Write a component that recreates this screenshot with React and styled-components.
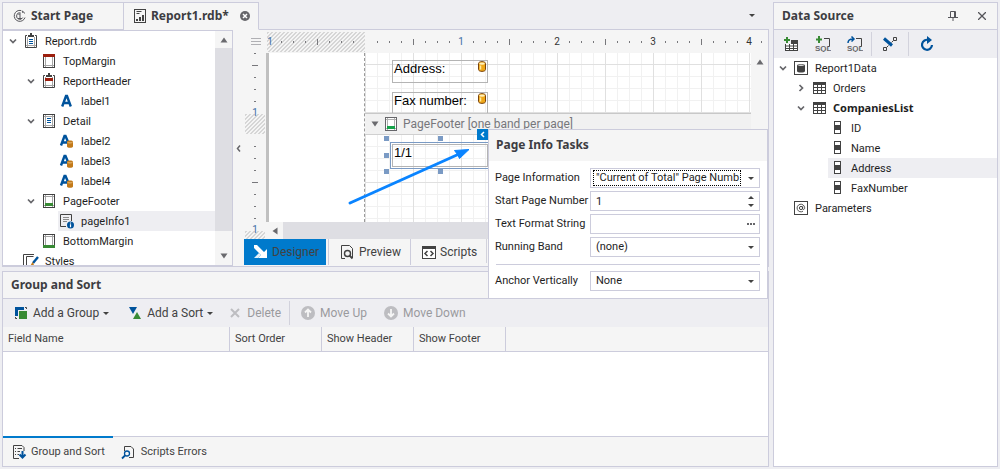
import React from "react";
import styled, { createGlobalStyle, css } from "styled-components";

const c = {
  page: "#eeeef2",
  panel: "#f5f5f5",
  line: "#ccccdc",
  text: "#1e1e1e",
  title: "#3d3d42",
  soft: "#dedee3",
  blue: "#007acc",
  navy: "#00539c",
  green: "#388a34",
  muted: "#9a9a9e",
  icon: "#424242",
};

const GlobalStyle = createGlobalStyle`
  * { box-sizing: border-box; }
  body { margin: 0; background: ${c.page}; }
  button, input, select { font: inherit; color: inherit; margin: 0; padding: 0; border: 0; background: none; border-radius: 0; }
  ul { list-style: none; margin: 0; padding: 0; }
  svg { display: block; flex: none; }
  h2 { margin: 0; font-family: "Noto Sans", sans-serif; font-size: 12px; }
`;

const Shell = styled.main`
  display: flex;
  gap: 4px;
  min-height: 100vh;
  padding: 2px;
  background: ${c.page};
  color: ${c.text};
  font-family: Roboto, sans-serif;
  font-size: 11px;
  line-height: 20px;
`;

const LeftColumn = styled.div`
  flex: 1;
  min-width: 0;
  display: flex;
  flex-direction: column;
`;

/* document tabs */
const TabStrip = styled.div`
  display: flex;
  height: 28px;
  border-bottom: 1px solid ${c.line};
`;

const DocTab = styled.button`
  display: flex;
  align-items: center;
  gap: 5px;
  width: ${(p) => p.$width};
  height: 28px;
  padding: 0 8px 0 10px;
  border: 1px solid ${c.line};
  border-bottom-color: ${(p) => (p.$active ? c.panel : c.line)};
  ${(p) => p.$active && css`border-left: 0;`}
  background: ${c.panel};
  color: ${c.title};
  font-family: "Noto Sans", sans-serif;
  font-size: 12px;
  font-weight: 700;
  white-space: nowrap;
`;

const PushRight = styled.span`
  margin-left: auto;
`;

const TabMenu = styled.button`
  margin-left: auto;
  padding: 0 14px;
`;

/* workspace: report explorer + designer */
const Workspace = styled.div`
  display: flex;
  flex: 0 0 237px;
  min-height: 0;
  border: 1px solid ${c.line};
  border-top: 0;
  background: ${c.panel};
`;

const Explorer = styled.section`
  display: flex;
  width: 230px;
  border: 1px solid ${c.line};
  border-left: 0;
  background: #fff;
  overflow: hidden;
`;

const Tree = styled.ul`
  flex: 1;
  min-width: 0;
`;

const TreeRow = styled.li`
  display: flex;
  align-items: center;
  height: 20px;
  padding-left: ${(p) => 2 + p.$level * 18}px;
  font-size: 11px;
  white-space: nowrap;
  ${(p) => p.$bold && css`font-family: "Noto Sans", sans-serif; font-weight: 700;`}
`;

const Twisty = styled.span`
  display: flex;
  justify-content: center;
  width: 17px;
  padding-right: 2px;
  flex: none;
`;

const TreeItem = styled.span`
  display: flex;
  align-items: center;
  gap: 6px;
  flex: 1;
  height: 20px;
  padding-left: 1px;
  background: ${(p) => (p.$selected ? c.page : "transparent")};
`;

const TreeName = styled.span`
  padding-top: 2px;
`;

const ScrollBar = styled.div`
  display: flex;
  flex-direction: column;
  align-items: center;
  width: 17px;
  background: ${c.panel};
`;

const ScrollButton = styled.button`
  display: grid;
  place-items: center;
  width: 17px;
  height: ${(p) => (p.$tall ? 34 : 17)}px;
  ${(p) => p.$tall && css`padding-top: 16px;`}
`;

const ScrollThumb = styled.div`
  flex: 1;
  width: 100%;
  background: ${c.soft};
`;

const Splitter = styled.button`
  display: grid;
  place-items: center;
  width: 11px;
`;

const Designer = styled.section`
  position: relative;
  flex: 1;
  min-width: 0;
  display: flex;
  flex-direction: column;
`;

const RulerRow = styled.div`
  display: flex;
  height: 23px;
  padding: 2px 0 1px;
`;

const RulerCorner = styled.div`
  display: grid;
  place-items: center;
  width: 23px;
`;

const hatch = css`
  background-color: ${c.panel};
  background-image: linear-gradient(135deg, #d6d6d6 25%, transparent 25% 50%, #d6d6d6 50% 75%, transparent 75%);
  background-size: 4px 4px;
`;

const HatchWide = styled.div`
  width: 98px;
  height: 20px;
  ${hatch}
`;

const RulerScale = styled.div`
  position: relative;
  flex: 1;
  display: flex;
  overflow: hidden;
`;

const RulerMarks = styled.svg`
  position: absolute;
  left: 0;
  top: 0;
`;

const CanvasRow = styled.div`
  display: flex;
  flex: 1;
  min-height: 0;
`;

const SideRuler = styled.div`
  position: relative;
  width: 22px;
  padding: 61px 1px 0;
  overflow: hidden;
`;

const HatchSide = styled.div`
  width: 20px;
  height: 20px;
  margin-bottom: 97px;
  ${hatch}
`;

const Margin = styled.div`
  width: 99px;
  border-left: 3px solid #c0c0c0;
  border-right: 1px dashed #9a9a9a;
  background: #fff;
`;

const Bands = styled.div`
  flex: 1;
  min-width: 0;
  display: flex;
  flex-direction: column;
`;

const Grid = styled.div`
  position: relative;
  ${(p) => (p.$h ? css`height: ${p.$h}px;` : css`flex: 1;`)}
  overflow: hidden;
  background-color: #fff;
  background-image:
    linear-gradient(90deg, #e0e0e0 1px, transparent 1px),
    linear-gradient(#e0e0e0 1px, transparent 1px),
    linear-gradient(90deg, #f1f1f1 1px, transparent 1px),
    linear-gradient(#f1f1f1 1px, transparent 1px);
  background-size: 48px 48px, 48px 48px, 12px 12px, 12px 12px;
  background-position: 0 0, 0 ${(p) => p.$y}px, 0 0, 0 ${(p) => p.$y}px;
`;

const BandHeader = styled.div`
  display: flex;
  align-items: center;
  gap: 6px;
  height: 22px;
  padding-left: 6px;
  border-top: 1px solid #c8c8c8;
  border-bottom: 1px solid #d0d0d0;
  background: #f1f1f1;
  color: #77777c;
  font-size: 12px;
  white-space: nowrap;
  overflow: hidden;
`;

/* report elements are placed freely on the band surface */
const ReportLabel = styled.div`
  position: absolute;
  left: 27px;
  top: ${(p) => p.$top}px;
  width: 96px;
  height: 23px;
  padding-left: 1px;
  border: 1px solid #b4b4b4;
  color: #000;
  font-family: "Liberation Sans", Arial, sans-serif;
  font-size: 13px;
  line-height: 16px;
  ${(p) => p.$selected && css`outline: 1px solid #7a9ac4; outline-offset: 1px;`}
`;

const Badge = styled.span`
  position: absolute;
  right: 1px;
  top: 0;
`;

const Handle = styled.i`
  position: absolute;
  left: ${(p) => p.$x}px;
  top: ${(p) => p.$y}px;
  width: 5px;
  height: 5px;
  background: #7a9ac4;
`;

const Pointer = styled.svg`
  position: absolute;
  left: 104px;
  top: 116px;
`;

const SideScroll = styled.div`
  width: 17px;
  padding-top: 6px;
  display: flex;
  justify-content: center;
  align-items: flex-start;
`;

const CanvasMain = styled.div`
  flex: 1;
  min-width: 0;
  display: flex;
  flex-direction: column;
`;

const CanvasBody = styled.div`
  flex: 1;
  min-height: 0;
  display: flex;
`;

const BottomScroll = styled.div`
  display: flex;
  height: 17px;
`;

const ViewTabs = styled.div`
  display: flex;
  height: 27px;
  padding-bottom: 1px;
  gap: 2px;
  font-size: 12px;
  color: ${c.icon};
`;

const ViewTab = styled.button`
  display: flex;
  align-items: center;
  gap: 4px;
  width: ${(p) => p.$width}px;
  padding: 0 10px;
  background: ${(p) => (p.$active ? c.blue : "transparent")};
  border-left: ${(p) => (p.$active ? "0" : `1px solid ${c.line}`)};
`;

const SmartTag = styled.button`
  position: absolute;
  left: 233px;
  top: 99px;
  display: grid;
  place-items: center;
  width: 11px;
  height: 11px;
  background: ${c.blue};
`;

const TaskPopup = styled.form`
  position: absolute;
  left: 244px;
  right: 0;
  top: 99px;
  z-index: 2;
  padding-bottom: 4px;
  border: 1px solid ${c.line};
  background: #fff;
`;

const PopupTitle = styled.h2`
  height: 31px;
  padding: 0 7px;
  margin-bottom: 7px;
  background: ${c.panel};
  color: ${c.title};
  line-height: 30px;
`;

const FieldRow = styled.div`
  display: flex;
  align-items: center;
  justify-content: space-between;
  height: 20px;
  margin: 0 7px 3px 6px;
  white-space: nowrap;
`;

const FieldBox = styled.div`
  position: relative;
  display: flex;
  align-items: center;
  width: 170px;
  height: 20px;
  border: 1px solid ${c.line};
  background: #fff;
`;

const fieldText = css`
  flex: 1;
  width: 100%;
  min-width: 0;
  height: 16px;
  margin: 0 18px 0 2px;
  padding-left: 3px;
  line-height: 14px;
  outline: 0;
  ${(p) => p.$focused && css`border: 1px dotted #000; padding-left: 2px;`}
`;

const SelectText = styled.select`
  appearance: none;
  ${fieldText}
`;

const InputText = styled.input`
  ${fieldText}
`;

const FieldMark = styled.span`
  position: absolute;
  right: 3px;
  width: 10px;
  display: grid;
  justify-items: center;
  gap: 5px;
  pointer-events: none;
`;

const PopupRule = styled.hr`
  height: 1px;
  margin: 7px 7px 6px;
  border: 0;
  background: ${c.line};
`;

/* group and sort */
const GroupPanel = styled.section`
  flex: 1;
  display: flex;
  flex-direction: column;
  margin-top: 4px;
  border: 1px solid ${c.line};
  background: #fff;
`;

const PanelTitle = styled.header`
  display: flex;
  align-items: center;
  height: 27px;
  padding: 0 8px;
  gap: 20px;
  border-bottom: 1px solid ${c.line};
  background: ${c.panel};
  color: ${c.title};
`;

const ToolBar = styled.div`
  display: flex;
  align-items: center;
  height: 28px;
  padding: 0 10px;
  background: ${c.page};
  color: ${c.icon};
  font-size: 12px;
`;

const ToolButton = styled.button`
  display: flex;
  align-items: center;
  gap: 4px;
  margin-right: ${(p) => p.$gap || 0}px;
  white-space: nowrap;
  &:disabled { color: ${c.muted}; }
`;

const ToolSeparator = styled.span`
  width: 1px;
  height: 24px;
  margin-right: ${(p) => p.$gap || 0}px;
  background: #d2d2dc;
`;

const SortTable = styled.table`
  width: 100%;
  table-layout: fixed;
  border-collapse: separate;
  border-spacing: 0;
`;

const HeadCell = styled.th`
  width: ${(p) => p.$width};
  height: 25px;
  padding: 0 5px;
  border-right: ${(p) => (p.$last ? 0 : 1)}px solid ${c.line};
  border-bottom: 1px solid ${c.line};
  background: ${c.panel};
  color: ${c.icon};
  font-weight: 400;
  text-align: left;
`;

const DockTabs = styled.div`
  display: flex;
  height: 30px;
  margin-top: auto;
  border-top: 1px solid ${c.line};
  background: ${c.panel};
  color: ${c.icon};
`;

const DockTab = styled.button`
  display: flex;
  align-items: center;
  gap: 4px;
  height: 29px;
  padding: 0 8px;
  margin-top: -1px;
  border-top: 2px solid ${(p) => (p.$active ? c.blue : "transparent")};
`;

/* data source */
const DataPanel = styled.aside`
  flex: 0 0 225px;
  border: 1px solid ${c.line};
  background: #fff;
`;

const DataTools = styled(ToolBar)`
  padding: 0 9px;
  gap: 8px;
`;

const DataRow = styled(TreeRow)`
  padding-left: ${(p) => 1 + p.$level * 18}px;
`;

/* small glyphs */
const Caret = () => (
  <svg width="6" height="3" viewBox="0 0 6 3"><path d="M0 0h6L3 3z" fill="#424242" /></svg>
);
const CaretUp = () => (
  <svg width="6" height="3" viewBox="0 0 6 3"><path d="M0 3h6L3 0z" fill="#424242" /></svg>
);
const Chevron = ({ closed }) => (
  <svg width="8" height="8" viewBox="0 0 8 8">
    <path d={closed ? "M2.5 1l3 3-3 3" : "M1 2.5l3 3 3-3"} fill="none" stroke="#66666a" strokeWidth="1.7" />
  </svg>
);
const Arrow = ({ d }) => (
  <svg width="8" height="6" viewBox="0 0 8 6"><path d={d} fill="#6a6a6e" /></svg>
);
const UP = "M0.5 5.5L4 0.5l3.5 5z";
const DOWN = "M0.5 0.5h7L4 5.5z";

const Svg = ({ children, w = 16, h = 16 }) => (
  <svg width={w} height={h} viewBox={`0 0 ${w} ${h}`} fill="none">{children}</svg>
);

const PageFrame = () => (
  <>
    <rect x="2.5" y="1.5" width="11" height="13" stroke="#424242" fill="#fff" />
    <path d="M4.500 2V14M11.500 2V14M3 3.500h10M3 12.500h10" stroke="#a5a5a5" />
  </>
);
const ClipFrame = () => (
  <>
    <path d="M4 2.500H2.500v12h11v-12H12" stroke="#424242" />
    <path d="M4.500 4V14M11.500 4V14M3 12.500h10" stroke="#a5a5a5" />
    <path d="M5 4V2h2V0h2v2h2v2z" fill="#424242" />
  </>
);
const icons = {
  report: (
    <Svg><ClipFrame /><path d="M6 6.500h4M6 8.500h4M6 10.500h4" stroke={c.navy} /></Svg>
  ),
  top: <Svg><PageFrame /><path d="M2 1h12v3H2z" fill="#9c1f0e" /></Svg>,
  header: <Svg><ClipFrame /><path d="M4 5h8v3H4z" fill="#9c1f0e" /></Svg>,
  detail: <Svg><PageFrame /><path d="M6 5.500h4M6 7.500h4M6 9.500h4" stroke={c.navy} /></Svg>,
  footer: <Svg><PageFrame /><path d="M4 10h8v3H4z" fill={c.green} /></Svg>,
  bottom: <Svg><PageFrame /><path d="M2 12h12v3H2z" fill={c.green} /></Svg>,
  label: (
    <Svg><path d="M3.200 13.500L7 3h1l3.800 10.500M5 10h5" stroke={c.navy} strokeWidth="2.400" /></Svg>
  ),
  bound: (
    <Svg>
      <path d="M2 12.500L5.500 3h1l3 7M4 9.500h4" stroke={c.navy} strokeWidth="2.400" />
      <path d="M8 8.800c0-1.800 6-1.800 6 0v4.700c0 1.800-6 1.800-6 0z" fill="#c27a1a" />
      <path d="M8.500 9.200c1 1 4 1 5 0" stroke="#f0cf98" strokeWidth=".8" />
    </Svg>
  ),
  info: (
    <Svg>
      <path d="M7 13.500H1.500v-12h11V8" stroke="#424242" />
      <path d="M4 4.500h6M4 6.500h6M4 8.500h4" stroke="#8a8a8a" />
      <circle cx="11.500" cy="12" r="3.500" fill={c.navy} />
      <path d="M11.500 9.500v1M11.500 11.300v3" stroke="#fff" strokeWidth="1.200" />
    </Svg>
  ),
  styles: (
    <Svg>
      <path d="M.5 14V1.500H11M3.500 14V3.500h7M3.500 13.500h2" stroke="#424242" />
      <path d="M15 4L10 10" stroke={c.navy} strokeWidth="2.400" />
      <path d="M9.500 9L6 15l5-3.500z" fill="#c27a1a" />
    </Svg>
  ),
  data: (
    <Svg>
      <rect x="1.500" y="1.500" width="13" height="13" stroke="#424242" />
      <path d="M4 5.500c0-2 8-2 8 0v5.500c0 2-8 2-8 0z" fill="#424242" />
      <ellipse cx="8" cy="5.300" rx="3" ry=".8" fill="#ddd" />
    </Svg>
  ),
  table: (
    <Svg>
      <path d="M2 2h13v12H2z" fill="#424242" />
      <path d="M3 5h3v2H3zM7 5h3v2H7zM11 5h3v2h-3zM3 8h3v2H3zM7 8h3v2H7zM11 8h3v2h-3zM3 11h3v2H3zM7 11h3v2H7zM11 11h3v2h-3z" fill="#fff" />
    </Svg>
  ),
  field: (
    <Svg>
      <rect x="5.500" y="1.500" width="6" height="12" fill="#fff" stroke="#424242" />
      <path d="M5 5h7v5H5z" fill="#424242" />
    </Svg>
  ),
  params: (
    <Svg>
      <rect x="1.500" y="1.500" width="13" height="13" stroke="#424242" />
      <circle cx="8" cy="8" r="1.600" stroke="#424242" />
      <path d="M9.700 6.300v2.500c0 1.200 2 1 2-1A3.800 3.800 0 1 0 10 11.200" stroke="#424242" strokeWidth=".9" />
    </Svg>
  ),
};

const Cylinder = () => (
  <Svg w={8} h={11}>
    <path d="M.5 2.500c0-2.500 7-2.500 7 0v6c0 2.500-7 2.500-7 0z" fill="#f0a818" stroke="#7a430c" />
    <path d="M2.500 4.500v4" stroke="#ffe9a0" strokeWidth="1.500" />
    <ellipse cx="4" cy="2.600" rx="2.800" ry="1.200" fill="#fff1bd" />
  </Svg>
);

const explorerRows = [
  ["Report.rdb", 0, "report", true],
  ["TopMargin", 1, "top"],
  ["ReportHeader", 1, "header", true],
  ["label1", 2, "label"],
  ["Detail", 1, "detail", true],
  ["label2", 2, "bound"],
  ["label3", 2, "bound"],
  ["label4", 2, "bound"],
  ["PageFooter", 1, "footer", true],
  ["pageInfo1", 2, "info"],
  ["BottomMargin", 1, "bottom"],
  ["Styles", 0, "styles"],
];

const dataRows = [
  ["Report1Data", 0, "data", "open"],
  ["Orders", 1, "table", "closed"],
  ["CompaniesList", 1, "table", "open"],
  ["ID", 2, "field"],
  ["Name", 2, "field"],
  ["Address", 2, "field"],
  ["FaxNumber", 2, "field"],
  ["Parameters", 0, "params"],
];

function HorizontalMarks() {
  const ticks = [];
  for (let i = 1; i <= 41; i++) {
    const x = 2 + i * 12;
    if (i % 8 === 0) {
      const n = i / 8 - 1;
      if (n > 0) {
        ticks.push(
          <text key={i} x={x} y="13" textAnchor="middle" fontSize="10" fill={n === 1 ? "#3a6fa5" : "#333"}>{n}</text>
        );
      }
    } else {
      const tall = i % 4 === 0;
      ticks.push(<path key={i} d={tall ? `M${x + 0.5} 7v6` : `M${x + 0.5} 9v2`} stroke="#77777b" />);
    }
  }
  return (
    <RulerMarks width="501" height="20">
      <text x="3" y="13" textAnchor="middle" fontSize="10" fill="#3a6fa5">1</text>
      {ticks}
    </RulerMarks>
  );
}

function VerticalMarks() {
  const ys = [0, 12, 24, 36, 48, 93, 105, 117, 129, 141, 153, 165];
  return (
    <RulerMarks width="22" height="186">
      {ys.map((y) => {
        const tall = y === 12 || y === 129;
        return <path key={y} d={tall ? `M8 ${y + 0.5}h6` : `M10 ${y + 0.5}h2`} stroke="#77777b" />;
      })}
      <text x="11" y="63" textAnchor="middle" fontSize="10" fill="#3a6fa5">1</text>
      <text x="11" y="180" textAnchor="middle" fontSize="10" fill="#3a6fa5">1</text>
    </RulerMarks>
  );
}

function ReportExplorer() {
  return (
    <Explorer aria-label="Report explorer">
      <Tree role="tree">
        {explorerRows.map(([name, level, icon, open]) => (
          <TreeRow key={name} $level={level} role="treeitem">
            <Twisty>{open && <Chevron />}</Twisty>
            <TreeItem $selected={name === "pageInfo1"}>{icons[icon]}<TreeName>{name}</TreeName></TreeItem>
          </TreeRow>
        ))}
      </Tree>
      <ScrollBar>
        <ScrollButton aria-label="Scroll up"><Arrow d={UP} /></ScrollButton>
        <ScrollThumb />
        <ScrollButton $tall aria-label="Scroll down"><Arrow d={DOWN} /></ScrollButton>
      </ScrollBar>
    </Explorer>
  );
}

function TaskField({ id, label, value, kind = "select", focused }) {
  return (
    <FieldRow>
      <label htmlFor={id}>{label}</label>
      <FieldBox>
        {kind === "select" ? (
          <SelectText id={id} $focused={focused}><option>{value}</option></SelectText>
        ) : (
          <InputText id={id} type="text" defaultValue={value} />
        )}
        <FieldMark>
          {kind === "spin" && <CaretUp />}
          {kind === "dots" ? (
            <Svg w={8} h={2}><path d="M0 0h2v2H0zM3 0h2v2H3zM6 0h2v2H6z" fill="#66666a" /></Svg>
          ) : <Caret />}
        </FieldMark>
      </FieldBox>
    </FieldRow>
  );
}

function ReportDesigner() {
  return (
    <Designer aria-label="Report designer">
      <RulerRow>
        <RulerCorner><Svg w={10} h={8}><path d="M0 .5h10M0 3.500h10M0 6.500h10" stroke="#b0b0b4" /></Svg></RulerCorner>
        <RulerScale><HatchWide /><HorizontalMarks /></RulerScale>
      </RulerRow>
      <CanvasRow>
        <SideRuler>
          <HatchSide />
          <HatchSide />
          <VerticalMarks />
        </SideRuler>
        <CanvasMain>
          <CanvasBody>
            <Margin />
            <Bands>
              <Grid $h={60} $y={11}>
                <ReportLabel $top={7}>Address:<Badge><Cylinder /></Badge></ReportLabel>
                <ReportLabel $top={39}>Fax number:<Badge><Cylinder /></Badge></ReportLabel>
              </Grid>
              <BandHeader>
                <Arrow d={DOWN} />
                <Svg w={12} h={16}>
                  <rect x=".5" y="1.500" width="11" height="13" stroke="#66666a" fill="#fff" />
                  <path d="M2.500 2V14M9.500 2V14M1 3.500h10M1 12.500h10" stroke="#b0b0b0" />
                  <path d="M2 10h8v3H2z" fill="#16a34a" />
                </Svg>
                PageFooter [one band per page]
              </BandHeader>
              <Grid $y={-1}>
                <ReportLabel $top={9} $selected>1/1</ReportLabel>
                <Handle $x={19} $y={1} /><Handle $x={73} $y={1} />
                <Handle $x={19} $y={18} /><Handle $x={19} $y={34} /><Handle $x={73} $y={34} />
              </Grid>
            </Bands>
            <SideScroll><Arrow d={UP} /></SideScroll>
          </CanvasBody>
          <BottomScroll>
            <ScrollButton aria-label="Scroll left">
              <svg width="6" height="8" viewBox="0 0 6 8"><path d="M5.500 .5v7L.5 4z" fill="#6a6a6e" /></svg>
            </ScrollButton>
            <ScrollThumb />
          </BottomScroll>
        </CanvasMain>
      </CanvasRow>
      <ViewTabs>
        <ViewTab $active $width={82}>
          <Svg w={14} h={14}>
            <path d="M0 0h3l7 7 3-3v9H4l3-3-7-7z" fill="#fff" />
            <path d="M0 13l5-5 2 2-3 3z" fill="#fff" opacity=".9" />
          </Svg>
          Designer
        </ViewTab>
        <ViewTab $width={80}>
          <Svg w={16} h={16}>
            <path d="M6 14.500H2.500v-13h8l3 3V14" stroke="#424242" />
            <circle cx="8.500" cy="9.500" r="3" stroke="#424242" strokeWidth="1.400" />
            <path d="M10.500 11.500l3 3" stroke="#424242" strokeWidth="1.800" />
          </Svg>
          Preview
        </ViewTab>
        <ViewTab $width={74}>
          <Svg w={15} h={14}>
            <path d="M1 1h14v13H1z" fill="#424242" /><path d="M2 4h12v9H2z" fill="#fff" />
            <path d="M6.500 6L4 8.500 6.500 11M9.500 6L12 8.500 9.500 11" stroke="#424242" strokeWidth="1.500" />
          </Svg>
          Scripts
        </ViewTab>
        <ToolSeparator />
      </ViewTabs>
      <Pointer width="128" height="90" viewBox="0 0 128 90" fill="none">
        <path d="M2 57L110 8.500" stroke="#0a84ff" strokeWidth="3" strokeLinecap="round" />
        <path d="M121 3.500L106.500 4.500l3 4 2 4z" fill="#0a84ff" stroke="#0a84ff" />
      </Pointer>
      <SmartTag type="button" aria-label="Tasks">
        <Svg w={7} h={7}><path d="M5 1L2.500 3.500 5 6" stroke="#fff" strokeWidth="1.500" /></Svg>
      </SmartTag>
      <TaskPopup>
        <PopupTitle>Page Info Tasks</PopupTitle>
        <TaskField id="page-info" label="Page Information" value={'"Current of Total" Page Numb'} focused />
        <TaskField id="start-page" label="Start Page Number" value="1" kind="spin" />
        <TaskField id="text-format" label="Text Format String" value="" kind="dots" />
        <TaskField id="running-band" label="Running Band" value="(none)" />
        <PopupRule />
        <TaskField id="anchor" label="Anchor Vertically" value="None" />
      </TaskPopup>
    </Designer>
  );
}

function GroupAndSort() {
  return (
    <GroupPanel>
      <PanelTitle><h2>Group and Sort</h2></PanelTitle>
      <ToolBar>
        <ToolButton $gap={18}>
          <Svg>
            <path d="M2 2h9v3H5v6H2z" fill={c.navy} />
            <path d="M6 6h8v8H6z" fill={c.green} />
            <path d="M12 2.500h1.500V4M2.500 12v1.500H4" stroke="#424242" />
          </Svg>
          Add a Group <Caret />
        </ToolButton>
        <ToolButton $gap={14}>
          <Svg><path d="M2 2h8L6 9z" fill={c.navy} /><path d="M6 14h8l-4-7z" fill={c.green} /></Svg>
          Add a Sort <Caret />
        </ToolButton>
        <ToolButton $gap={8} disabled>
          <Svg><path d="M4 4l8 8M12 4l-8 8" stroke="#bdbdc1" strokeWidth="2" /></Svg>
          Delete
        </ToolButton>
        <ToolSeparator $gap={10} />
        <ToolButton $gap={16} disabled>
          <Svg><circle cx="8" cy="8" r="7" fill="#bdbdc1" /><path d="M8 12V5M5 7.500l3-3 3 3" stroke="#f5f5f5" strokeWidth="1.800" /></Svg>
          Move Up
        </ToolButton>
        <ToolButton disabled>
          <Svg><circle cx="8" cy="8" r="7" fill="#bdbdc1" /><path d="M8 4v7M5 8.500l3 3 3-3" stroke="#f5f5f5" strokeWidth="1.800" /></Svg>
          Move Down
        </ToolButton>
      </ToolBar>
      <SortTable>
        <thead>
          <tr>
            <HeadCell $width="227px">Field Name</HeadCell>
            <HeadCell $width="92px">Sort Order</HeadCell>
            <HeadCell $width="92px">Show Header</HeadCell>
            <HeadCell $width="92px">Show Footer</HeadCell>
            <HeadCell $last />
          </tr>
        </thead>
      </SortTable>
      <DockTabs>
        <DockTab $active>
          <Svg>
            <path d="M8 14.500H2.500v-13H11l2 2V7M4 4.500h1M6.500 4.500H11M4 7.500h1M6.500 7.500H9M4 10.500h1M6.500 10.500H8" stroke="#424242" />
            <path d="M11.500 7v6M8.500 10.500l3 3 3-3" stroke={c.navy} strokeWidth="2" />
          </Svg>
          Group and Sort
        </DockTab>
        <DockTab>
          <Svg>
            <path d="M3.500 7V2.500H10l2.500 2.500v8.500H8" stroke="#424242" />
            <circle cx="6" cy="9.500" r="2.500" stroke={c.navy} strokeWidth="1.300" />
            <path d="M4 11.500l-3 3" stroke={c.navy} strokeWidth="1.800" />
          </Svg>
          Scripts Errors
        </DockTab>
      </DockTabs>
    </GroupPanel>
  );
}

const SqlText = () => (
  <text x="0" y="15" fontSize="8" fontWeight="700" fontFamily="Liberation Sans, sans-serif" fill="#66666a">SQL</text>
);

function DataSource() {
  return (
    <DataPanel>
      <PanelTitle>
        <h2>Data Source</h2>
        <PushRight>
          <ToolButton aria-label="Pin">
            <Svg w={10} h={10}><path d="M2.500 6V.5h5V6M6.500 1v5M0 6.500h10M5 7v3" stroke="#55555a" /></Svg>
          </ToolButton>
        </PushRight>
        <ToolButton aria-label="Close" $gap={3}>
          <Svg w={8} h={8}><path d="M0 0l8 8M8 0L0 8" stroke="#55555a" strokeWidth="1.300" /></Svg>
        </ToolButton>
      </PanelTitle>
      <DataTools>
        <ToolButton $gap={8} aria-label="Add table">
          <Svg>
            <path d="M3 4h12v11H2V8h1z" fill="#424242" />
            <path d="M3 8h3v1.500H3zM7 8h3v1.500H7zM11 8h3v1.500h-3zM3 10.500h3V12H3zM7 10.500h3V12H7zM11 10.500h3V12h-3zM3 13h3v1H3zM7 13h3v1H7zM11 13h3v1h-3z" fill="#fff" />
            <path d="M0 0h8v8H0z" fill={c.page} />
            <path d="M4 1v6M1 4h6" stroke={c.green} strokeWidth="2" />
          </Svg>
        </ToolButton>
        <ToolButton $gap={8} aria-label="Add query">
          <Svg><path d="M9 2.500h5.500v8H13" stroke="#424242" /><path d="M4 0v7M1 3.500h6" stroke={c.green} strokeWidth="2" /><SqlText /></Svg>
        </ToolButton>
        <ToolButton aria-label="Edit query">
          <Svg><path d="M9 2.500h5.500v8H13" stroke="#424242" /><path d="M1 7c0-3 2-4 5-4M4.500 .5L7 3 4.500 5.500" stroke={c.navy} strokeWidth="1.500" /><SqlText /></Svg>
        </ToolButton>
        <ToolSeparator />
        <ToolButton aria-label="Relations">
          <Svg w={20} h={16}>
            <path d="M3.500 11.500h3v3h-3zM13.500 1.500h3v3h-3z" stroke="#424242" />
            <path d="M6.500 11.500l2-2M11.500 6.500l2-2" stroke="#424242" />
            <path d="M4 2.500l8 7" stroke={c.navy} strokeWidth="3" />
          </Svg>
        </ToolButton>
        <ToolSeparator />
        <ToolButton aria-label="Refresh">
          <Svg w={20} h={16}><path d="M11.500 4A5 5 0 1 0 15 9" stroke={c.navy} strokeWidth="2.200" /><path d="M10 0l5 4-5 4z" fill={c.navy} /></Svg>
        </ToolButton>
      </DataTools>
      <Tree role="tree">
        {dataRows.map(([name, level, icon, state]) => {
          const bold = name === "CompaniesList";
          return (
            <DataRow key={name} $level={level} $bold={bold} role="treeitem">
              <Twisty>{state && <Chevron closed={state === "closed"} />}</Twisty>
              <TreeItem $selected={name === "Address"}>
                {icons[icon]}
                {bold ? name : <TreeName>{name}</TreeName>}
              </TreeItem>
            </DataRow>
          );
        })}
      </Tree>
    </DataPanel>
  );
}

export default function App() {
  return (
    <Shell>
      <GlobalStyle />
      <LeftColumn>
        <TabStrip>
          <DocTab $width="122px">
            <Svg w={13} h={14}>
              <path d="M8 1.500A5.500 5.500 0 1 0 12 8.500M7.500 3.800A3.300 3.300 0 1 0 9.800 8.500" stroke="#55555a" />
              <path d="M5.500 6l1.500-1.500V9M5 9.500h4M9 1.500l1 2.500M10.500 2.500l1 2" stroke="#55555a" />
            </Svg>
            Start Page
          </DocTab>
          <DocTab $active $width="135px">
            <Svg w={12} h={14}>
              <rect x=".5" y=".5" width="11" height="13" stroke="#424242" />
              <path d="M2.500 2.500h5M2.500 4.500h3" stroke="#424242" />
              <path d="M2 10h2v2H2zM5 8h2v4H5zM8 6h2v6H8z" fill="#424242" />
            </Svg>
            Report1.rdb*
            <PushRight>
              <Svg w={10} h={10}><circle cx="5" cy="5" r="5" fill="#66666a" /><path d="M3 3l4 4M7 3L3 7" stroke="#fff" strokeWidth="1.500" /></Svg>
            </PushRight>
          </DocTab>
          <TabMenu aria-label="Open documents"><Caret /></TabMenu>
        </TabStrip>
        <Workspace>
          <ReportExplorer />
          <Splitter aria-label="Collapse explorer">
            <svg width="5" height="7" viewBox="0 0 5 7"><path d="M4 .5L1.500 3.500 4 6.500" stroke="#66666a" strokeWidth="1.500" fill="none" /></svg>
          </Splitter>
          <ReportDesigner />
        </Workspace>
        <GroupAndSort />
      </LeftColumn>
      <DataSource />
    </Shell>
  );
}
